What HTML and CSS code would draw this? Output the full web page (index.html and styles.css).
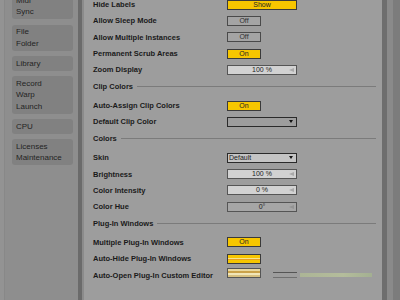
FILE: index.html
```html
<!DOCTYPE html>
<html>
<head>
<meta charset="utf-8">
<link rel="stylesheet" href="styles.css">
</head>
<body>
<div class="app">
  <nav class="sidebar">
    <div class="group"><div>Midi</div><div>Sync</div></div>
    <div class="group"><div>File</div><div>Folder</div></div>
    <div class="group"><div>Library</div></div>
    <div class="group"><div>Record</div><div>Warp</div><div>Launch</div></div>
    <div class="group"><div>CPU</div></div>
    <div class="group"><div>Licenses</div><div>Maintenance</div></div>
  </nav>
  <div class="divider"></div>
  <main class="main">
    <div class="list">
      <div class="row"><span class="label">Hide Labels</span><span class="btn on wide">Show</span></div>
      <div class="row"><span class="label">Allow Sleep Mode</span><span class="btn off">Off</span></div>
      <div class="row"><span class="label">Allow Multiple Instances</span><span class="btn off">Off</span></div>
      <div class="row"><span class="label">Permanent Scrub Areas</span><span class="btn on">On</span></div>
      <div class="row"><span class="label">Zoom Display</span><span class="slider">100 %</span></div>
      <div class="section"><span>Clip Colors</span></div>
      <div class="row"><span class="label">Auto-Assign Clip Colors</span><span class="btn on">On</span></div>
      <div class="row"><span class="label">Default Clip Color</span><span class="drop"></span></div>
      <div class="section"><span>Colors</span></div>
      <div class="row"><span class="label">Skin</span><span class="drop light">Default</span></div>
      <div class="row"><span class="label">Brightness</span><span class="slider">100 %</span></div>
      <div class="row"><span class="label">Color Intensity</span><span class="slider">0 %</span></div>
      <div class="row"><span class="label">Color Hue</span><span class="slider dim">0°</span></div>
      <div class="section"><span>Plug-In Windows</span></div>
      <div class="row"><span class="label">Multiple Plug-In Windows</span><span class="btn on">On</span></div>
      <div class="row"><span class="label">Auto-Hide Plug-In Windows</span><span class="btn on striped"></span></div>
      <div class="row"><span class="label">Auto-Open Plug-In Custom Editor</span><span class="glitch"><span class="btn tan"></span><span class="marks"></span><span class="ghost"></span></span></div>
    </div>
  </main>
  <div class="edge"><div class="e1"></div><div class="e2"></div><div class="e3"></div></div>
</div>
</body>
</html>
```
FILE: styles.css
```css
html, body {
  margin: 0;
  padding: 0;
  width: 400px;
  height: 300px;
  overflow: hidden;
  background: #9d9d9d;
}
.app {
  display: flex;
  height: 300px;
  font-family: "Liberation Sans", Arial, sans-serif;
  color: #1c1c1c;
}
.sidebar {
  flex: none;
  background: #8e8e8e;
  border-left: 4px solid #939393;
  box-shadow: inset 1px 0 0 #888;
  padding: 0 5px 0 8px;
  box-sizing: border-box;
  width: 78px;
  display: flex;
  flex-direction: column;
  gap: 5.5px;
  margin-top: -7px;
}
.group {
  background: #818181;
  border-radius: 3px;
  padding: 1.5px 4px;
  font-size: 8px;
  line-height: 11.5px;
  color: #242424;
}
.divider {
  width: 4px;
  flex: none;
  background: #6b6b6b;
  border-right: 2px solid #8b8b8b;
}
.main {
  flex: 1;
  background: #9d9d9d;
  padding: 0 6px 0 9px;
}
.list {
  margin-top: -3.5px;
  display: flex;
  flex-direction: column;
}
.row {
  height: 16.3px;
  display: grid;
  grid-template-columns: 134px 1fr;
  align-items: center;
}
.label {
  font-size: 7.5px;
  font-weight: bold;
  color: #1a1a1a;
  white-space: nowrap;
}
.section {
  height: 19.5px;
  box-sizing: border-box;
  padding-bottom: 2.3px;
  display: flex;
  align-items: center;
  font-size: 7.5px;
  font-weight: bold;
  color: #1a1a1a;
}
.section::after {
  content: "";
  flex: 1;
  height: 0;
  border-top: 1px solid #7b7b7b;
  margin-left: 4px;
}
.btn, .slider, .drop {
  box-sizing: border-box;
  height: 10px;
  border: 1px solid #3a3a3a;
  font-size: 7px;
  line-height: 8px;
  text-align: center;
  color: #222;
  display: block;
}
.btn { width: 34px; }
.btn.wide { width: 70px; }
.on { background: #f7c600; }
.off { background: #a4a4a4; border-color: #4a4a4a; color: #303030; }
.striped {
  background: linear-gradient(#f7c600 0 35%, #f8e58c 35% 55%, #e8a020 55% 65%, #f7c600 65%);
}
.slider {
  width: 70px;
  background: #d2d2d2;
  border-color: #555;
  position: relative;
}
.slider::after {
  content: "";
  position: absolute;
  right: 2px;
  top: 2px;
  border-style: solid;
  border-width: 2px 5px 2px 0;
  border-color: transparent #a9a9a9 transparent transparent;
}
.slider.dim { background: #a6a6a6; }
.slider.dim::after { border-right-color: #939393; }
.drop {
  width: 70px;
  background: #9d9d9d;
  border-color: #2a2a2a;
  text-align: left;
  padding-left: 1px;
  position: relative;
}
.drop.light { background: #c4c4c4; }
.drop::after {
  content: "";
  position: absolute;
  right: 3px;
  top: 2.5px;
  border-style: solid;
  border-width: 3px 2.5px 0 2.5px;
  border-color: #111 transparent transparent transparent;
}
.glitch {
  display: flex;
  align-items: center;
  height: 10px;
  margin-bottom: 5px;
}
.tan {
  background: linear-gradient(#e9d9a0 0 30%, #caa24a 30% 45%, #f1e6b8 45% 70%, #3a3a3a 70% 80%, #d6c080 80%);
  border-color: #555;
}
.marks {
  width: 24px;
  height: 4px;
  margin-left: 12px;
  margin-top: 4px;
  border-top: 1px solid #444;
  border-bottom: 1px solid #666;
  opacity: 0.8;
}
.ghost {
  width: 72px;
  height: 4px;
  margin-left: 3px;
  margin-top: 4px;
  background: linear-gradient(90deg, #b8c890, #c7d69a 60%, #a8bf88);
  opacity: 0.55;
}
.edge {
  width: 18px;
  flex: none;
  display: flex;
}
.e1 { width: 5px; background: #6e6e6e; }
.e2 { width: 6px; background: #8a8a8a; }
.e3 { width: 7px; background: #7c7c7c; }
```
